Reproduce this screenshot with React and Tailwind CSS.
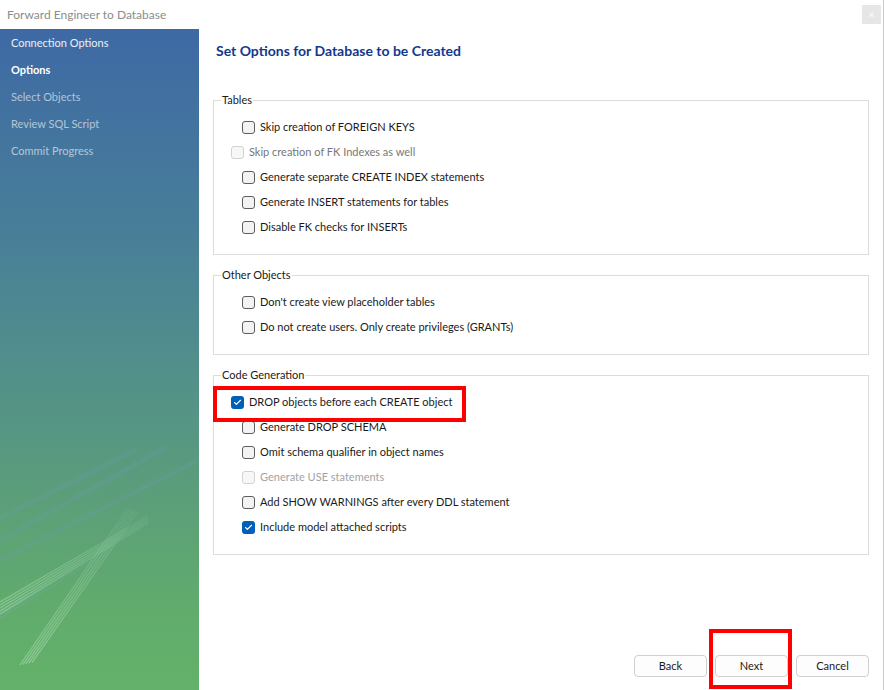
import { Check } from 'lucide-react'

const font = { fontFamily: 'Lato, "Segoe UI", sans-serif' }

function Box({ checked, disabled }) {
  if (checked)
    return (
      <span className="flex h-[13px] w-[13px] shrink-0 items-center justify-center rounded-[3px] bg-[#005fb8]">
        <Check className="h-[9px] w-[9px] text-white" strokeWidth={3} />
      </span>
    )
  return (
    <span
      className={
        'h-[13px] w-[13px] shrink-0 rounded-[3px] border ' +
        (disabled ? 'border-[#d2d2d2] bg-[#f7f7f7]' : 'border-[#5c5c5c] bg-[#f3f3f3]')
      }
    />
  )
}

function Row({ label, checked, disabled, outdent, tone }) {
  return (
    <div className={'flex h-[25px] items-center gap-[5px] ' + (outdent ? 'pl-[17px]' : 'pl-[28px]')}>
      <Box checked={checked} disabled={disabled} />
      <span className={tone || (disabled ? 'text-[#777]' : 'text-[#1a1a1a]')}>{label}</span>
    </div>
  )
}

function Group({ title, children, className }) {
  return (
    <fieldset className={'border border-[#dcdcdc] pb-[14px] pt-[7px] ' + (className || '')}>
      <legend className="ml-[7px] px-[1px] leading-[16px] text-[#1a1a1a]">{title}</legend>
      {children}
    </fieldset>
  )
}

function Streaks() {
  return (
    <svg className="pointer-events-none absolute bottom-0 left-0 h-[300px] w-[199px]" viewBox="0 0 199 300">
      <defs>
        <linearGradient id="fadeA" x1="0" y1="1" x2="1" y2="0">
          <stop offset="0" stopColor="#c9f0cf" stopOpacity="0.4" />
          <stop offset="1" stopColor="#c9f0cf" stopOpacity="0.08" />
        </linearGradient>
        <linearGradient id="fadeB" x1="0" y1="0" x2="1" y2="0">
          <stop offset="0" stopColor="#7fb2c4" stopOpacity="0.35" />
          <stop offset="1" stopColor="#7fb2c4" stopOpacity="0" />
        </linearGradient>
      </defs>
      <g stroke="#6f9db8" strokeWidth="5" fill="none" opacity="0.2">
        <line x1="0" y1="150" x2="165" y2="58" />
        <line x1="0" y1="128" x2="135" y2="60" />
        <line x1="0" y1="170" x2="199" y2="70" />
      </g>
      <g stroke="url(#fadeA)" strokeWidth="1.3" fill="none">
        {[0, 3, 6, 9, 12].map((d) => (
          <line key={'a' + d} x1={20 + d} y1={275 - d * 0.2} x2={128 + d * 0.8} y2={118 + d * 0.3} />
        ))}
        {[0, 3, 6, 9, 12].map((d) => (
          <line key={'b' + d} x1={0} y1={212 + d} x2={148} y2={126 + d * 0.6} />
        ))}
      </g>
      <g stroke="url(#fadeB)" strokeWidth="1" fill="none">
        {[0, 3, 6].map((d) => (
          <line key={'c' + d} x1={0} y1={222 + d} x2={148} y2={134 + d * 0.6} />
        ))}
      </g>
    </svg>
  )
}

export default function App() {
  const nav = [
    ['Connection Options', 'text-white/90'],
    ['Options', 'text-white font-bold'],
    ['Select Objects', 'text-white/60'],
    ['Review SQL Script', 'text-white/60'],
    ['Commit Progress', 'text-white/60'],
  ]
  return (
    <div className="relative flex h-[690px] w-[884px] flex-col overflow-hidden bg-white text-[11px]" style={font}>
      <div className="flex h-[29px] shrink-0 items-center justify-between border-r border-[#c8c8c8] pl-[7px] pr-[2px]">
        <span className="text-[12px] text-[#8c8c8c]">Forward Engineer to Database</span>
        <span className="flex h-[19px] w-[19px] items-center justify-center bg-[#e6e6e6] text-[10px] text-white">×</span>
      </div>
      <div className="flex min-h-0 flex-1">
        <div className="relative w-[199px] shrink-0 bg-[linear-gradient(180deg,#3e69a4_0%,#487e99_30%,#52908a_52%,#5a9c7c_68%,#61ac6c_88%,#63b16a_100%)]">
          <div className="flex flex-col pl-[11px] pt-[1px]">
            {nav.map(([t, c]) => (
              <div key={t} className={'flex h-[27px] items-center ' + c}>
                {t}
              </div>
            ))}
          </div>
          <Streaks />
        </div>
        <div className="relative flex flex-1 flex-col border-r border-[#c8c8c8] pl-[14px] pr-[14px] pt-[13px]">
          <h1 className="mb-[32px] pl-[3px] text-[14px] font-bold leading-[18px] text-[#12378d]">
            Set Options for Database to be Created
          </h1>
          <Group title="Tables">
            <Row label="Skip creation of FOREIGN KEYS" />
            <Row label="Skip creation of FK Indexes as well" disabled outdent />
            <Row label="Generate separate CREATE INDEX statements" />
            <Row label="Generate INSERT statements for tables" />
            <Row label="Disable FK checks for INSERTs" />
          </Group>
          <Group title="Other Objects" className="mt-[12px]">
            <Row label="Don't create view placeholder tables" />
            <Row label="Do not create users. Only create privileges (GRANTs)" />
          </Group>
          <Group title="Code Generation" className="relative mt-[12px]">
            <Row label="DROP objects before each CREATE object" checked outdent />
            <Row label="Generate DROP SCHEMA" />
            <Row label="Omit schema qualifier in object names" />
            <Row label="Generate USE statements" disabled tone="text-[#a3a3a3]" />
            <Row label="Add SHOW WARNINGS after every DDL statement" />
            <Row label="Include model attached scripts" checked />
            <div className="pointer-events-none absolute left-[-1px] top-[3px] h-[36px] w-[253px] border-4 border-[#ff0000]" />
          </Group>
          <div className="mt-auto mb-[13px] flex justify-end gap-[8px]">
            {['Back', 'Next', 'Cancel'].map((b) => (
              <div key={b} className="relative">
                <button className="h-[22px] w-[73px] rounded-[4px] border border-[#d0d0d0] bg-[#fdfdfd] text-[11px] text-[#1a1a1a]">
                  {b}
                </button>
                {b === 'Next' && (
                  <div className="pointer-events-none absolute left-[-6px] top-[-26px] h-[60px] w-[83px] border-4 border-[#ff0000]" />
                )}
              </div>
            ))}
          </div>
        </div>
      </div>
    </div>
  )
}
